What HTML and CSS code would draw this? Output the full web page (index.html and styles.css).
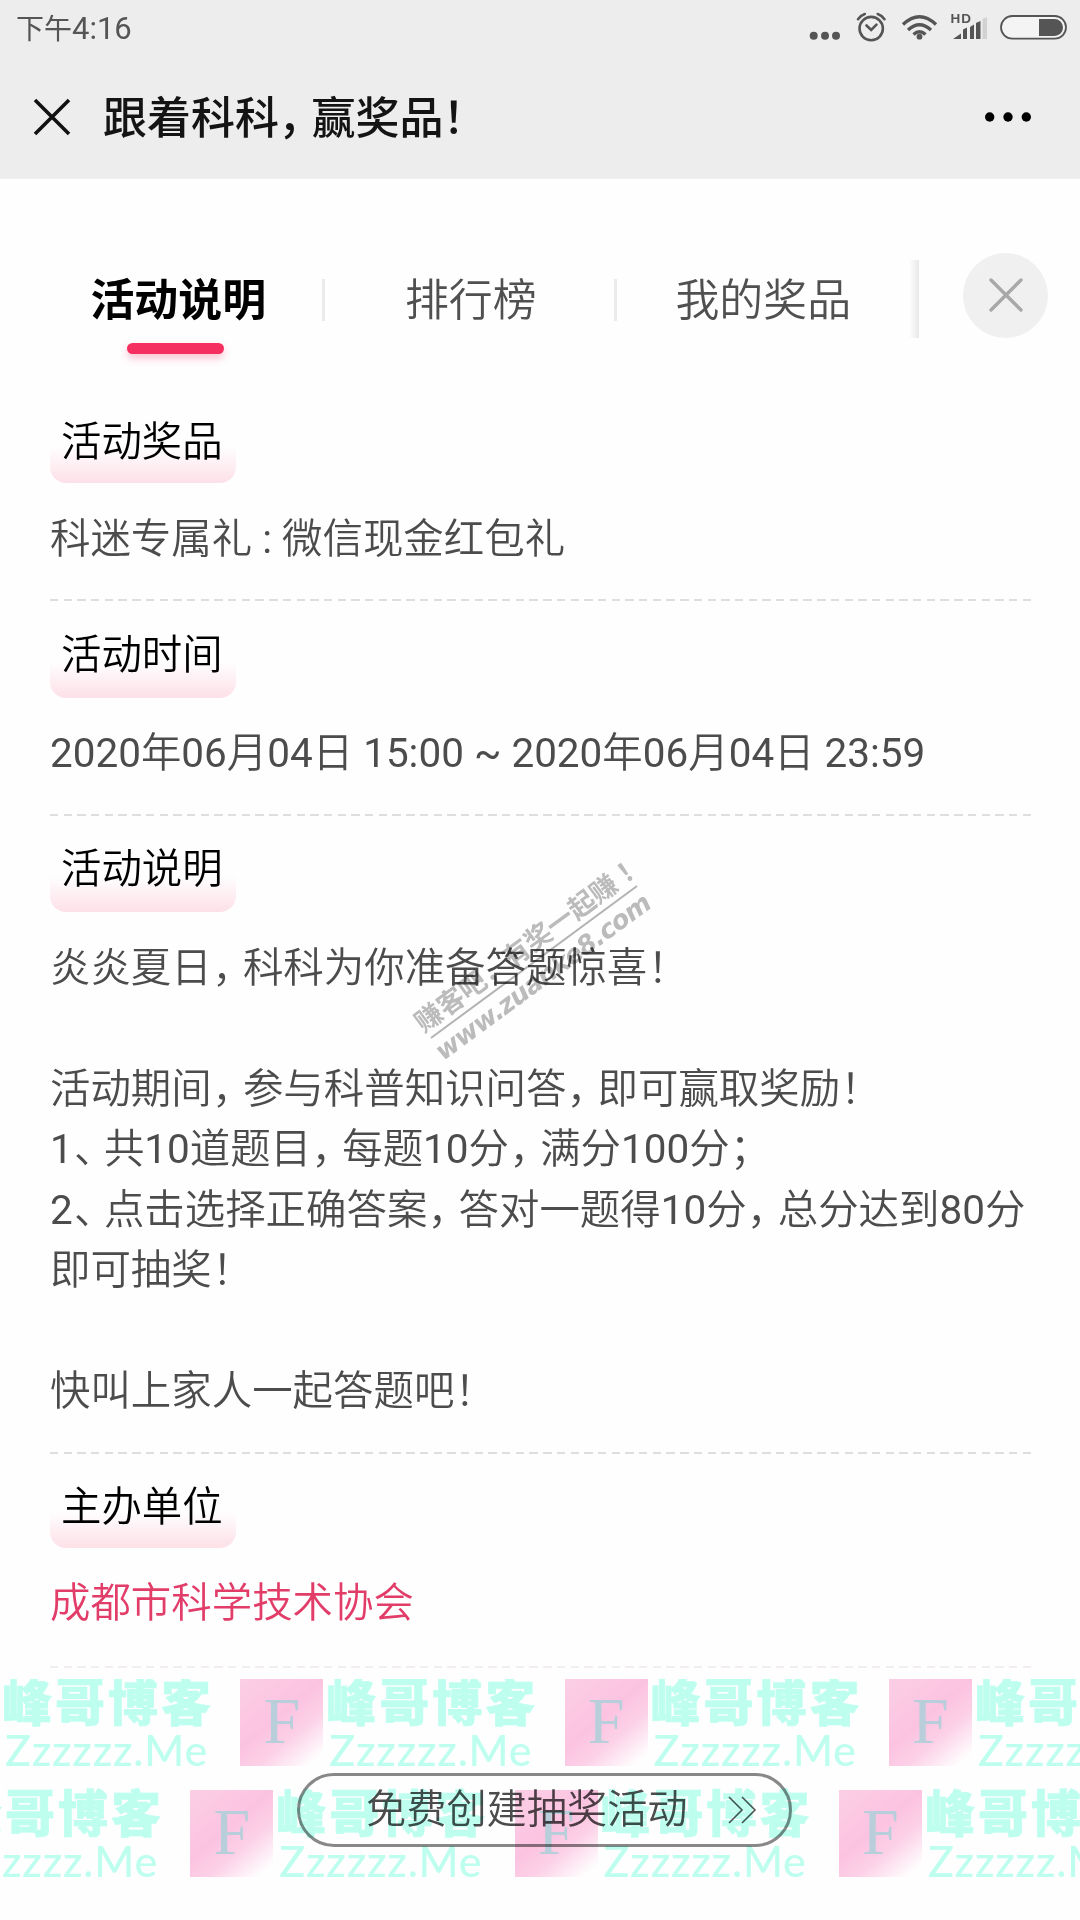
FILE: index.html
```html
<!DOCTYPE html>
<html lang="zh-CN">
<head>
  <meta charset="UTF-8">
  <meta name="viewport" content="width=device-width, initial-scale=1.0">
  <title>跟着科科，赢奖品！</title>
  <link rel="stylesheet" href="styles.css">
</head>
<body>
  <header class="header">
    <div class="status-bar">
      <div class="time">下午<span>4:16</span></div>
      <svg class="status-icons" width="260" height="30" viewBox="808 12 260 30">
        <g fill="#555">
          <circle cx="813.7" cy="35.7" r="4"/>
          <circle cx="825" cy="35.7" r="4"/>
          <circle cx="836" cy="35.7" r="4"/>
        </g>
        <!-- alarm -->
        <g fill="none" stroke="#555" stroke-width="2.6" stroke-linecap="round">
          <circle cx="871.2" cy="28.6" r="11.7"/>
          <path d="M866.5 25.5l4.7 4.5 5.3-5.3M858 19.2q3-4 6.8-5.2M884.5 19.2q-3-4-6.8-5.2"/>
        </g>
        <!-- wifi -->
        <g fill="none" stroke="#555" stroke-width="3.4">
          <path d="M903 24.5q16.5-15.5 33 0M908 30q11.5-10.5 23 0M913.5 34.5q6-5.5 12 0"/>
        </g>
        <circle cx="919.5" cy="36.7" r="2.9" fill="#555"/>
        <!-- signal -->
        <text class="hd" x="950.5" y="23.3" textLength="20.5">HD</text>
        <path fill="#555" d="M953 39l8-5.5V39zM963 39v-9.5l4-2V39zM970 39V27l4-2.5V39zM976 39V23l4.5-2V39z"/>
        <path fill="#d2d2d2" d="M982.5 39V19l4.5-2v22z"/>
        <!-- battery -->
        <rect x="1001" y="16" width="65" height="22.6" rx="11.3" fill="#f4f4f4" stroke="#555" stroke-width="1.8"/>
        <path fill="#555" d="M1039 19h15.5a8.5 8.5 0 0 1 0 17H1039z"/>
      </svg>
    </div>
    <div class="nav-bar">
      <svg width="40" height="40" viewBox="0 0 40 40"><path d="M3 3l34 34M37 3L3 37" stroke="#111" stroke-width="3.6"/></svg>
      <h1>跟着科科<i>，</i>赢奖品<i>！</i></h1>
      <svg class="more" width="48" height="12" viewBox="0 0 48 12">
        <circle cx="5.7" cy="6" r="4.7"/>
        <circle cx="24" cy="6" r="4.7"/>
        <circle cx="42.3" cy="6" r="4.7"/>
      </svg>
    </div>
  </header>

  <nav class="tabs">
    <div class="tab active">活动说明</div>
    <div class="tab tab-rank">排行榜</div>
    <div class="tab">我的奖品</div>
    <div class="edge"></div>
    <div class="close">
      <svg width="36" height="36" viewBox="0 0 36 36"><path d="M3 3l30 30M33 3L3 33" stroke="#a8a8a8" stroke-width="3.4" stroke-linecap="round"/></svg>
    </div>
  </nav>

  <main class="content">
    <section>
      <h2>活动奖品</h2>
      <p>科迷专属礼<span> : </span>微信现金红包礼</p>
    </section>
    <section>
      <h2>活动时间</h2>
      <p><span>2020</span>年<span>06</span>月<span>04</span>日<span> 15:00 ~ 2020</span>年<span>06</span>月<span>04</span>日<span> 23:59</span></p>
    </section>
    <section>
      <h2>活动说明</h2>
      <p>炎炎夏日<i>，</i>科科为你准备答题惊喜<i>！</i><br><br>
        活动期间<i>，</i>参与科普知识问答<i>，</i>即可赢取奖励<i>！</i><br>
        <span>1</span><i class="dun">、</i>共<span>10</span>道题目<i>，</i>每题<span>10</span>分<i>，</i>满分<span>100</span>分<i>；</i><br>
        <span>2</span><i class="dun">、</i>点击选择正确答案<i>，</i>答对一题得<span>10</span>分<i>，</i>总分达到<span>80</span>分<br>
        即可抽奖<i>！</i><br><br>
        快叫上家人一起答题吧<i>！</i></p>
    </section>
    <section class="last">
      <h2>主办单位</h2>
      <p class="host">成都市科学技术协会</p>
    </section>
  </main>

  <a class="create-btn">免费创建抽奖活动
    <svg width="30" height="28" viewBox="0 0 30 28"><path d="M2 1l13 13L2 27M15 1l13 13-13 13" fill="none" stroke="#555" stroke-width="1.6"/></svg>
  </a>

  <svg class="site-mark" width="290" height="80" viewBox="0 0 290 80">
    <text class="mark-cn" x="4" y="32" textLength="244">赚客吧，有奖一起赚</text>
    <text class="mark-cn" x="255" y="32">！</text>
    <path d="M7 40h256" stroke="#b4b4b4" stroke-width="2"/>
    <text class="mark-url" x="3" y="66" textLength="261">www.zuanke8.com</text>
  </svg>

  <div class="stamps">
    <div class="stamp-row">
      <div class="stamp"><b>F</b><div><strong>峰哥博客</strong><em>Zzzzzz.Me</em></div></div>
      <div class="stamp"><b>F</b><div><strong>峰哥博客</strong><em>Zzzzzz.Me</em></div></div>
      <div class="stamp"><b>F</b><div><strong>峰哥博客</strong><em>Zzzzzz.Me</em></div></div>
      <div class="stamp"><b>F</b><div><strong>峰哥博客</strong><em>Zzzzzz.Me</em></div></div>
    </div>
    <div class="stamp-row shifted">
      <div class="stamp"><b>F</b><div><strong>峰哥博客</strong><em>Zzzzzz.Me</em></div></div>
      <div class="stamp"><b>F</b><div><strong>峰哥博客</strong><em>Zzzzzz.Me</em></div></div>
      <div class="stamp"><b>F</b><div><strong>峰哥博客</strong><em>Zzzzzz.Me</em></div></div>
      <div class="stamp"><b>F</b><div><strong>峰哥博客</strong><em>Zzzzzz.Me</em></div></div>
    </div>
  </div>
</body>
</html>
```
FILE: styles.css
```css
* {
  box-sizing: border-box;
}

body {
  position: relative;
  width: 1080px;
  height: 1920px;
  margin: 0;
  overflow: hidden;
  background: #fefefe;
  color: #4c4c4c;
  font-family: Roboto, "Noto Sans CJK SC", sans-serif;
}

h1, h2, p {
  margin: 0;
  font-weight: 350;
}

/* full-width punctuation, set tighter than one em */
i {
  display: inline-block;
  width: 0.77em;
  padding-left: 0.01em;
  font-style: normal;
  font-family: "Noto Sans CJK SC", sans-serif;
  line-height: 1;
  white-space: nowrap;
}

.dun {
  padding-left: 0.03em;
}

.header {
  height: 179px;
  background: #ededed;
}

.status-bar {
  display: flex;
  justify-content: space-between;
  height: 57px;
  padding: 0 12px 0 16px;
}

.time {
  font-size: 28px;
  line-height: 57px;
  color: #555;
}

.time span {
  font-size: 31px;
}

.status-icons {
  margin-top: 12px;
}

.hd {
  font: bold 13.5px "Liberation Sans", sans-serif;
  fill: #555;
}

.nav-bar {
  display: flex;
  align-items: center;
  height: 120px;
  padding: 0 48px 0 32px;
}

.nav-bar h1 {
  margin: 0 0 4px 31px;
  font-size: 44px;
  font-weight: 500;
  color: #141414;
}

.nav-bar i {
  margin-left: -0.03em;
}

.more {
  margin-left: auto;
}

.tabs {
  display: flex;
  align-items: center;
  height: 206px;
  padding: 50px 32px 24px;
}

.tab {
  position: relative;
  width: 292.5px;
  margin-top: 12px;
  text-align: center;
  font-size: 43.9px;
  font-weight: 350;
  line-height: 60px;
  color: #505050;
}

.tab.active {
  font-weight: 700;
  color: #000;
}

.tab.active,
.tab-rank {
  background: linear-gradient(#ebebeb, #ebebeb) right 8px / 3px 42px no-repeat;
}

.tab.active::after {
  content: "";
  position: absolute;
  left: 95px;
  top: 72px;
  width: 97px;
  height: 11px;
  border-radius: 6px;
  background: #f53060;
  box-shadow: 0 4px 8px rgba(245, 48, 96, 0.3);
}

.edge {
  width: 10px;
  height: 78px;
  margin-top: 7px;
  margin-left: -1px;
  background: linear-gradient(to right, #fefefe, #e9e9e9);
}

.close {
  display: flex;
  align-items: center;
  justify-content: center;
  width: 85px;
  height: 85px;
  margin-left: auto;
  border-radius: 50%;
  background: #f0f0f0;
}

.content {
  padding: 0 49px 0 50px;
}

section {
  padding: 22.5px 0 32px;
  background: repeating-linear-gradient(to right, #dedede 0 8.4px, transparent 8.4px 13.7px) left bottom / 100% 2px no-repeat;
}

section:first-child {
  padding-top: 24px;
}

h2 {
  width: 186px;
  height: 74px;
  margin-bottom: 25.5px;
  padding: 2px 0 0 11px;
  border-radius: 16px;
  background: linear-gradient(#fefefe, #fde0e8) left bottom / 100% 36px no-repeat;
  font-size: 40.4px;
  line-height: 60px;
  color: #000;
}

section:first-child h2 {
  padding-top: 4px;
}

p {
  font-size: 40.45px;
  line-height: 60.5px;
  white-space: nowrap;
}

p span {
  font-weight: 400;
}

.host {
  color: #e23c68;
}

.last {
  background-image: repeating-linear-gradient(to right, #f2eef0 0 8.4px, transparent 8.4px 13.7px);
}

.last h2 {
  height: 71.5px;
}

.last .host {
  padding-bottom: 2px;
}

.create-btn {
  display: flex;
  align-items: center;
  width: 495px;
  height: 74px;
  margin: 105px 0 0 297px;
  padding-left: 66px;
  border: 3px solid #888;
  border-radius: 37px;
  font-size: 40.2px;
  font-weight: 350;
  line-height: 68px;
}

.create-btn svg {
  margin-left: 39px;
}

/* diagonal mark over the text */
.site-mark {
  position: absolute;
  left: 399px;
  top: 922px;
  transform: rotate(-36.4deg);
  transform-origin: 135px 40px;
  mix-blend-mode: multiply;
}

.mark-cn {
  font: 700 27px "Noto Sans CJK SC", sans-serif;
  fill: #bcbcbc;
}

.mark-url {
  font: italic 700 26px "DejaVu Sans", sans-serif;
  fill: #bcbcbc;
}

/* repeated stamps over the bottom of the page */
.stamps {
  position: absolute;
  left: 0;
  top: 1679px;
  width: 1080px;
  overflow: hidden;
  mix-blend-mode: multiply;
}

.stamp-row {
  display: flex;
  height: 111px;
  margin-left: -84px;
}

.stamp-row.shifted {
  margin-left: -134px;
}

.stamp {
  display: flex;
  flex: none;
  width: 324.3px;
  height: 87px;
  color: #befff0;
}

.stamp b {
  width: 83px;
  height: 87px;
  background: linear-gradient(140deg, #fcd0e6, #fdc4e2 45%, #fdd2e8 65%, #fff 92%);
  font: 400 66px/83px "Liberation Serif", serif;
  text-align: center;
  color: #b9cfdb;
}

.stamp div {
  display: flex;
  flex-direction: column;
  padding-left: 3px;
}

.stamp strong {
  margin-top: -3px;
  font: 900 50px/46px "Noto Sans CJK SC", sans-serif;
  letter-spacing: 3px;
  -webkit-text-stroke: 0.6px #befff0;
}

.stamp em {
  padding: 3px 0 0 3px;
  font: normal 500 43px/50px Lato, sans-serif;
  letter-spacing: 0.8px;
}
```
